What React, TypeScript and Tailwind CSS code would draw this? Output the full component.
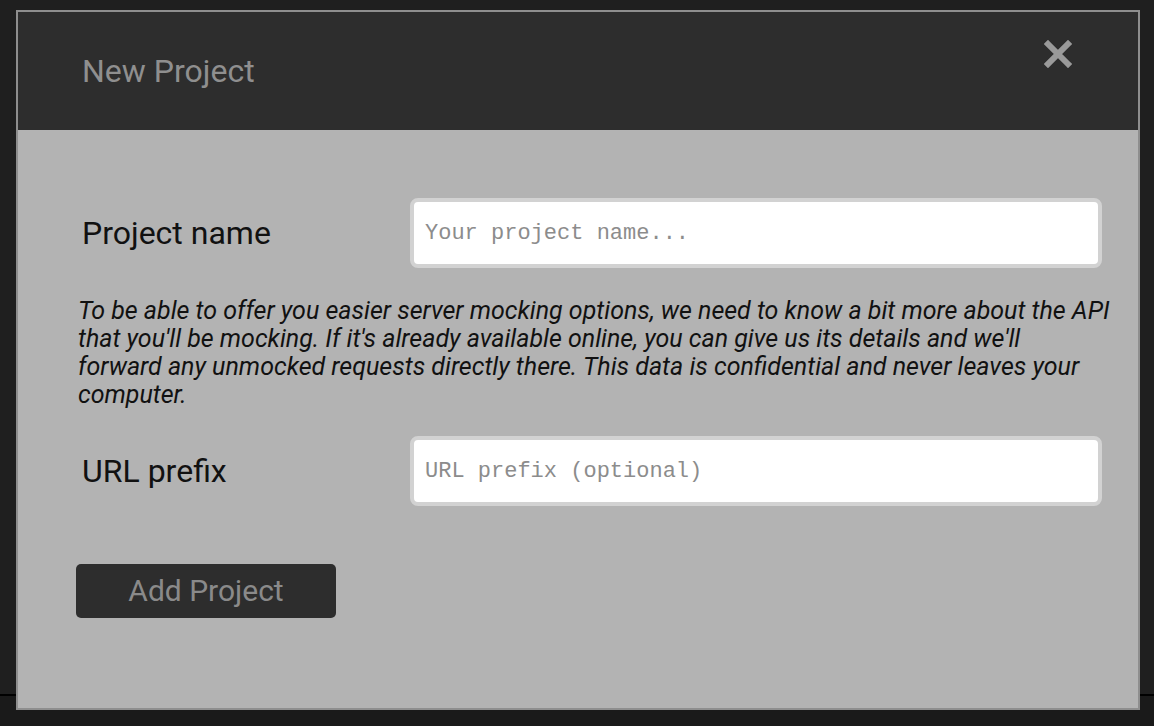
import React from "react";

export default function App() {
  return (
    <div className="relative w-[1154px] h-[726px] overflow-hidden bg-[#1f1f1f]" style={{ fontFamily: "Roboto, 'Noto Sans', sans-serif" }}>
      <div className="flex flex-col h-full">
        <div className="h-[694px] bg-[#1f1f1f]" />
        <div className="h-[2px] bg-black" />
        <div className="flex-1 bg-[#1a1a1a]" />
      </div>
      <div className="absolute left-[16px] top-[10px] w-[1124px] h-[700px] border-2 border-[#8e8e8e] bg-[#b3b3b3] flex flex-col">
        <div className="h-[118px] bg-[#2d2d2d] flex items-start justify-between pl-[64px] pr-[66px]">
          <h1 className="mt-[41px] text-[32px] leading-[36px] text-[#8f8f8f] font-normal">New Project</h1>
          <svg className="mt-[28px]" width="28" height="28" viewBox="0 0 28 28">
            <path d="M4 4 L24 24 M24 4 L4 24" stroke="#9a9a9a" strokeWidth="6" strokeLinecap="square" />
          </svg>
        </div>
        <div className="flex flex-col pl-[60px] pr-[36px]">
          <div className="mt-[68px] flex items-center">
            <label className="w-[332px] pl-[4px] text-[32px] text-[#111] leading-[36px]">Project name</label>
            <div className="flex-1 h-[70px] rounded-[8px] border-4 border-[#d2d2d2] bg-white flex items-center px-[11px]">
              <span className="text-[22px] text-[#8c8c8c]" style={{ fontFamily: "'Liberation Mono', monospace" }}>Your project name...</span>
            </div>
          </div>
          <p className="mt-[29px] w-[1050px] italic text-[25px] leading-[28px] text-[#111] whitespace-nowrap">
            To be able to offer you easier server mocking options, we need to know a bit more about the API
            <br />
            that you'll be mocking. If it's already available online, you can give us its details and we'll
            <br />
            forward any unmocked requests directly there. This data is confidential and never leaves your
            <br />
            computer.
          </p>
          <div className="mt-[27px] flex items-center">
            <label className="w-[332px] pl-[4px] text-[32px] text-[#111] leading-[36px]">URL prefix</label>
            <div className="flex-1 h-[70px] rounded-[8px] border-4 border-[#d2d2d2] bg-white flex items-center px-[11px]">
              <span className="text-[22px] text-[#8c8c8c]" style={{ fontFamily: "'Liberation Mono', monospace" }}>URL prefix (optional)</span>
            </div>
          </div>
          <button className="mt-[58px] -ml-[2px] w-[260px] h-[54px] rounded-[5px] bg-[#2d2d2d] text-[#8a8a8a] text-[30px] leading-[34px] flex items-center justify-center">
            Add Project
          </button>
        </div>
      </div>
    </div>
  );
}
